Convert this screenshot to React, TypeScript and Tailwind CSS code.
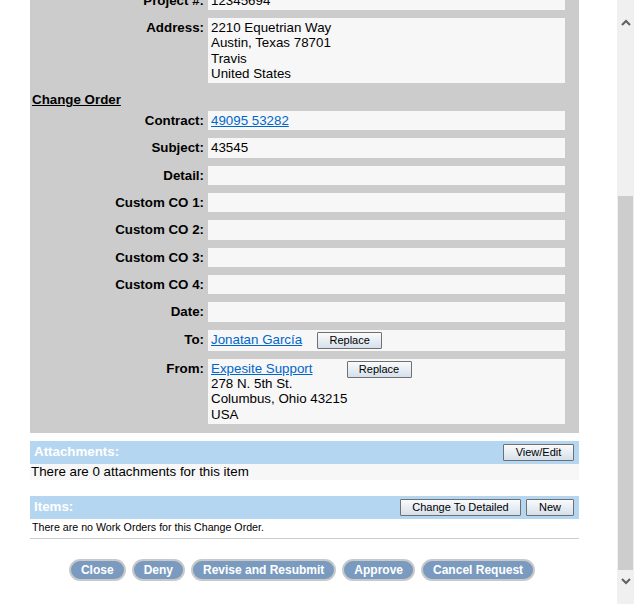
import React from "react";

const font = { fontFamily: '"Liberation Sans", Arial, sans-serif' };

function SmallButton({ label, className = "" }: { label: string; className?: string }) {
  return (
    <button
      className={`h-[17px] shrink-0 border border-[#707070] rounded-[1px] bg-gradient-to-b from-[#fafbfc] to-[#d5e0eb] text-[11px] leading-[15px] text-black ${className}`}
    >
      {label}
    </button>
  );
}

function Row({ label, children, boxClass = "" }: { label: string; children?: React.ReactNode; boxClass?: string }) {
  return (
    <div className="flex items-start">
      <div className="w-[174px] shrink-0 py-[2px] text-right font-bold leading-[15.33px]">{label}</div>
      <div className={`flex-1 ml-[4px] bg-[#f7f7f7] px-[3px] py-[2px] min-h-[19.33px] leading-[15.33px] ${boxClass}`}>
        {children}
      </div>
    </div>
  );
}

function PillButton({ label }: { label: string }) {
  return (
    <button className="h-[22px] rounded-full border-2 border-[#c9c9c9] bg-[#7a9bbf] px-[10px] text-[12px] font-bold leading-[18px] text-white">
      {label}
    </button>
  );
}

export default function App() {
  return (
    <div className="flex h-[604px] w-[634px] overflow-hidden bg-white text-[13.33px] text-black" style={font}>
      <div className="w-[617px] shrink-0 pl-[30px] pr-[38px]">
        {/* main detail panel */}
        <div className="-mt-[9.33px] flex flex-col gap-[8px] bg-[#cccccc] pr-[14px] pb-[9px]">
          <Row label="Project #:">12345694</Row>
          <Row label="Address:">
            2210 Equetrian Way
            <br />
            Austin, Texas 78701
            <br />
            Travis
            <br />
            United States
          </Row>
          <div className="-mb-[8px] h-[19.67px] pl-[2px] pt-[1px] font-bold leading-[15.33px] underline">Change Order</div>
          <Row label="Contract:">
            <a href="#" className="text-[#0066cc] underline">
              49095 53282
            </a>
          </Row>
          <Row label="Subject:">43545</Row>
          <Row label="Detail:" />
          <Row label="Custom CO 1:" />
          <Row label="Custom CO 2:" />
          <Row label="Custom CO 3:" />
          <Row label="Custom CO 4:" />
          <Row label="Date:" />
          <Row label="To:" boxClass="h-[21px] flex items-center">
            <a href="#" className="text-[#0066cc] underline">
              Jonatan García
            </a>
            <SmallButton label="Replace" className="ml-[15px] w-[65px]" />
          </Row>
          <Row label="From:">
            <div className="flex h-[15.33px] items-start">
              <a href="#" className="text-[#0066cc] underline">
                Expesite Support
              </a>
              <SmallButton label="Replace" className="ml-[34px] w-[65px]" />
            </div>
            278 N. 5th St.
            <br />
            Columbus, Ohio 43215
            <br />
            USA
          </Row>
        </div>

        {/* attachments */}
        <div className="mt-[8px]">
          <div className="flex h-[23px] items-center justify-between bg-[#b5d6f0] pl-[4px] pr-[5px]">
            <span className="font-bold text-white">Attachments:</span>
            <SmallButton label="View/Edit" className="w-[71px]" />
          </div>
          <div className="h-[16px] bg-[#f7f7f7] pl-[1px] leading-[16px]">There are 0 attachments for this item</div>
        </div>

        {/* items */}
        <div className="mt-[16px]">
          <div className="flex h-[23px] items-center justify-between bg-[#b5d6f0] pl-[4px] pr-[5px]">
            <span className="font-bold text-white">Items:</span>
            <div className="flex gap-[5px]">
              <SmallButton label="Change To Detailed" className="w-[121px]" />
              <SmallButton label="New" className="w-[48px]" />
            </div>
          </div>
          <div className="h-[17px] pl-[2px] text-[10.67px] leading-[16px]">There are no Work Orders for this Change Order.</div>
        </div>

        <div className="mt-[2px] border-t border-[#cccccc]" />

        <div className="mt-[20px] flex justify-center gap-[6px] pr-[5px]">
          <PillButton label="Close" />
          <PillButton label="Deny" />
          <PillButton label="Revise and Resubmit" />
          <PillButton label="Approve" />
          <PillButton label="Cancel Request" />
        </div>
      </div>

      {/* scrollbar */}
      <div className="flex w-[17px] shrink-0 flex-col bg-[#f0f0f0]">
        <div className="flex h-[44px] items-center justify-center">
          <svg width="10" height="7" viewBox="0 0 10 7">
            <path d="M1 6 L5 2 L9 6" fill="none" stroke="#606060" strokeWidth="2" />
          </svg>
        </div>
        <div className="mt-[152px] ml-[1px] h-[374px] w-[15px] bg-[#cdcdcd]" />
        <div className="flex h-[22px] items-center justify-center">
          <svg width="10" height="7" viewBox="0 0 10 7">
            <path d="M1 1 L5 5 L9 1" fill="none" stroke="#606060" strokeWidth="2" />
          </svg>
        </div>
      </div>
    </div>
  );
}
